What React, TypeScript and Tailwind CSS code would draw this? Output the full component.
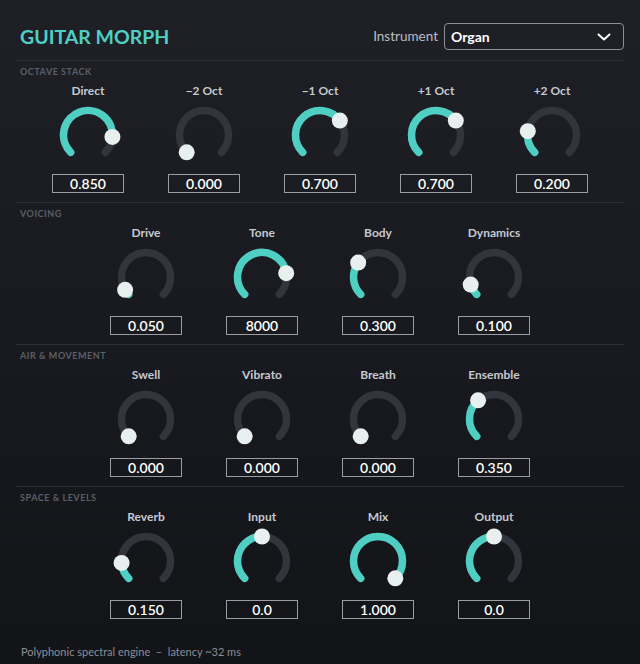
import React from 'react';

type KnobSpec = { label: string; value: number; display: string };

const sections: { title: string; knobs: KnobSpec[] }[] = [
  {
    title: 'Octave Stack',
    knobs: [
      { label: 'Direct', value: 0.85, display: '0.850' },
      { label: '\u22122 Oct', value: 0, display: '0.000' },
      { label: '\u22121 Oct', value: 0.7, display: '0.700' },
      { label: '+1 Oct', value: 0.7, display: '0.700' },
      { label: '+2 Oct', value: 0.2, display: '0.200' },
    ],
  },
  {
    title: 'Voicing',
    knobs: [
      { label: 'Drive', value: 0.05, display: '0.050' },
      { label: 'Tone', value: 0.8, display: '8000' },
      { label: 'Body', value: 0.3, display: '0.300' },
      { label: 'Dynamics', value: 0.1, display: '0.100' },
    ],
  },
  {
    title: 'Air & Movement',
    knobs: [
      { label: 'Swell', value: 0, display: '0.000' },
      { label: 'Vibrato', value: 0, display: '0.000' },
      { label: 'Breath', value: 0, display: '0.000' },
      { label: 'Ensemble', value: 0.35, display: '0.350' },
    ],
  },
  {
    title: 'Space & Levels',
    knobs: [
      { label: 'Reverb', value: 0.15, display: '0.150' },
      { label: 'Input', value: 0.5, display: '0.0' },
      { label: 'Mix', value: 1, display: '1.000' },
      { label: 'Output', value: 0.5, display: '0.0' },
    ],
  },
];

const CX = 30;
const CY = 30;
const R = 24.5;

// angle in degrees, clockwise from 12 o'clock
const point = (deg: number) => {
  const a = (deg * Math.PI) / 180;
  return { x: CX + R * Math.sin(a), y: CY - R * Math.cos(a) };
};

const arc = (from: number, to: number) => {
  const s = point(from);
  const e = point(to);
  const large = to - from > 180 ? 1 : 0;
  return `M ${s.x} ${s.y} A ${R} ${R} 0 ${large} 1 ${e.x} ${e.y}`;
};

const Knob: React.FC<KnobSpec> = ({ label, value, display }) => {
  const end = -135 + value * 270;
  const thumb = point(end);
  return (
    <div className="w-[116px] flex flex-col items-center">
      <div className="h-[16px] leading-[16px] text-[12px] font-bold text-[#c5c9d0]">{label}</div>
      <svg width="60" height="60" viewBox="0 0 60 60" className="mt-[6px] overflow-visible">
        <path d={arc(-135, 135)} fill="none" stroke="#33353c" strokeWidth="7.5" strokeLinecap="round" />
        {value > 0 && (
          <path d={arc(-135, end)} fill="none" stroke="#4fcfc3" strokeWidth="7.5" strokeLinecap="round" />
        )}
        <circle cx={thumb.x} cy={thumb.y} r="8" fill="#e8f0ef" />
      </svg>
      <div className="mt-[9px] w-[72px] h-[19px] border border-[#9a9da4] flex items-center justify-center text-[14px] font-semibold text-white leading-none">
        {display}
      </div>
    </div>
  );
};

const App: React.FC = () => {
  return (
    <div
      className="w-[640px] h-[664px] bg-gradient-to-b from-[#1f2026] to-[#131418] px-4 flex flex-col"
      style={{ fontFamily: 'Lato, "Open Sans", sans-serif' }}
    >
      {/* Header */}
      <div className="h-[60px] flex items-center justify-between pt-[23px] pb-[10px]">
        <h1 className="pl-1 text-[19.5px] font-bold text-[#4fcfc3]">GUITAR MORPH</h1>
        <div className="flex items-center gap-[6px]">
          <span className="text-[13.5px] text-[#b9bdc5]">Instrument</span>
          <div className="w-[180px] h-[27px] rounded-[4px] border border-[#8c8f96] flex items-center justify-between pl-[6px] pr-[12px]">
            <span className="text-[14px] font-bold text-white">Organ</span>
            <svg width="14" height="8" viewBox="0 0 14 8">
              <path d="M1.5 1.5 L7 6.5 L12.5 1.5" fill="none" stroke="#ffffff" strokeWidth="2" strokeLinecap="round" strokeLinejoin="round" />
            </svg>
          </div>
        </div>
      </div>

      {sections.map((section) => (
        <section key={section.title} className="border-t border-[#2c2e35] h-[142px] flex flex-col">
          <div className="h-[22px] leading-[22px] pl-1 text-[9px] font-bold uppercase tracking-[0.06em] text-[#5b5f67]">
            {section.title}
          </div>
          <div className="flex justify-center">
            {section.knobs.map((k) => (
              <Knob key={k.label} {...k} />
            ))}
          </div>
        </section>
      ))}

      <div className="pl-[5px] pt-[16px] text-[11px] text-[#8a8e96]">
        Polyphonic spectral engine &nbsp;&ndash;&nbsp; latency ~32 ms
      </div>
    </div>
  );
};

export default App;
